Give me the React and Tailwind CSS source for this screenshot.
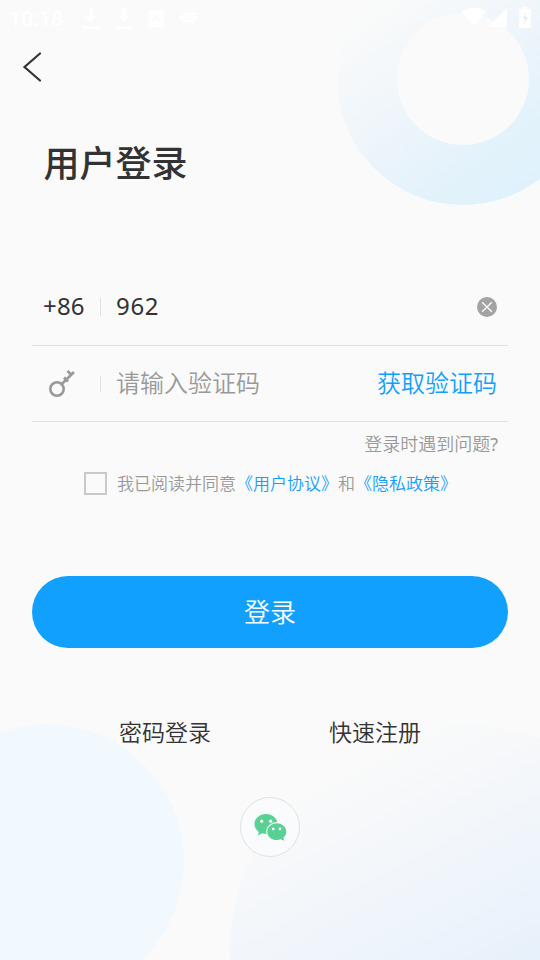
import { useState } from 'react';

const Backdrop = () => (
  <svg className="absolute inset-0" width="540" height="960" viewBox="0 0 540 960" aria-hidden="true">
    <defs>
      <linearGradient id="ring" gradientUnits="userSpaceOnUse" x1="375" y1="15" x2="510" y2="200">
        <stop offset="0" stopColor="#f9fafa" />
        <stop offset="0.5" stopColor="#ecf4fb" />
        <stop offset="0.8" stopColor="#e2f2fb" />
        <stop offset="1" stopColor="#dff2fb" />
      </linearGradient>
      <linearGradient id="bubble" gradientUnits="userSpaceOnUse" x1="345" y1="755" x2="475" y2="1010">
        <stop offset="0" stopColor="#fafafa" />
        <stop offset="0.35" stopColor="#f4f7fa" />
        <stop offset="0.65" stopColor="#eef4fc" />
        <stop offset="1" stopColor="#e5f0fa" />
      </linearGradient>
    </defs>
    <circle cx="463" cy="79" r="126" fill="url(#ring)" />
    <circle cx="463" cy="79" r="66" fill="#fafafa" />
    <circle cx="47" cy="861" r="137" fill="#f1f9ff" />
    <circle cx="459" cy="953" r="229" fill="url(#bubble)" />
  </svg>
);

const DownloadIcon = () => (
  <svg width="16" height="21" viewBox="0 0 16 21" fill="#fff">
    <path d="M6 0h4v8h4l-6 6-6-6h4zM0 18.500h16v2H0z" />
  </svg>
);

const StatusBar = () => (
  <div className="flex h-9 items-center pl-[9px] pr-[9px] text-white">
    <span className="w-[74px] pt-0.5 font-[Roboto] text-[21px] font-medium leading-none tracking-[0.2px]">10:18</span>
    <div className="flex w-[120px] items-center gap-[17px]">
      <DownloadIcon />
      <DownloadIcon />
      <svg width="15" height="17" viewBox="0 0 15 17">
        <rect width="15" height="17" rx="2" fill="#fff" />
        <path d="M4 12.500l3.500-7 3.500 7" fill="none" stroke="#fafafa" strokeWidth="1.800" />
      </svg>
      <svg width="20" height="14" viewBox="0 0 20 14" fill="none" stroke="#fff" strokeWidth="2.500" className="-ml-0.5">
        <path d="M3 3h15M0 6.500h19M3 10h13" />
      </svg>
    </div>
    <div className="-mt-0.5 ml-auto flex items-center">
      <svg width="24" height="20" viewBox="0 0 24 20" fill="#fff">
        <path d="M0 5Q12-4 24 5L12 19z" />
      </svg>
      <svg width="19" height="19" viewBox="0 0 19 19" fill="#fff" className="ml-0.5">
        <path d="M19 0v19H0z" />
      </svg>
      <svg width="12" height="21" viewBox="0 0 12 21" className="ml-3">
        <path d="M3.500 0h5v2H11q1 0 1 1v17q0 1-1 1H1q-1 0-1-1V3q0-1 1-1h2.500z" fill="#fff" />
        <path d="M7.500 5L3.500 12H6l-.5 5L9 10H6.500z" fill="#e3f0f9" />
      </svg>
    </div>
  </div>
);

const KeyIcon = () => (
  <svg width="26" height="28" viewBox="0 0 26 28" fill="none" stroke="#999" strokeWidth="2.600">
    <circle cx="8" cy="19" r="6.700" />
    <path d="M12.800 14L25 2M15 7.500l4 4M18.500 1l4 4" />
  </svg>
);

const ClearIcon = () => (
  <svg width="20" height="20" viewBox="0 0 20 20">
    <circle cx="10" cy="10" r="10" fill="#a3a3a3" />
    <path d="M5.200 5.200l9.600 9.600M14.800 5.200l-9.600 9.600" stroke="#fafafa" strokeWidth="1.400" />
  </svg>
);

const WechatIcon = () => (
  <svg width="34" height="28" viewBox="0 0 34 28" className="ml-px">
    <path d="M12 1C5.500 1 .5 5.500.5 11c0 3.200 1.700 6 4.300 7.900L3.800 22.500l4.400-2.300c1.300.4 2.600.5 3.800.5 6.500 0 11.500-4.400 11.500-9.700S18.500 1 12 1z" fill="#58d192" />
    <ellipse cx="22.800" cy="18.600" rx="10.700" ry="9.500" fill="#fafbfc" />
    <path d="M22.800 10.300c-5.300 0-9.500 3.700-9.500 8.400s4.200 8.400 9.500 8.400c1.400 0 2.700-.3 3.900-.8l3.500 1.500-.8-3.100c1.800-1.500 2.900-3.600 2.900-6 0-4.700-4.200-8.400-9.500-8.400z" fill="#58d192" />
    <g fill="#fff">
      <circle cx="7.700" cy="8.200" r="1.600" />
      <circle cx="16.600" cy="8.200" r="1.600" />
      <circle cx="19.200" cy="15.900" r="1.300" />
      <circle cx="26" cy="15.900" r="1.300" />
    </g>
  </svg>
);

const App = () => {
  const [phone, setPhone] = useState('962');
  const [agreed, setAgreed] = useState(false);

  return (
    <div className="relative h-[960px] w-[540px] overflow-hidden bg-[#fafafa] font-['Noto_Sans_CJK_SC',sans-serif] font-[350] text-[#333]">
      <Backdrop />
      <div className="relative flex h-full flex-col">
        <StatusBar />
        <button type="button" aria-label="返回" className="ml-[22px] mt-4 w-5">
          <svg width="20" height="30" viewBox="0 0 20 30" fill="none" stroke="#333" strokeWidth="2.200" strokeLinecap="round">
            <path d="M18 1.500L2.500 15 18 28.500" />
          </svg>
        </button>

        <h1 className="ml-[43.5px] mt-[52px] text-[36px] font-medium leading-[54px]">用户登录</h1>

        <form className="mx-8 mt-[81px]" onSubmit={(e) => e.preventDefault()}>
          <div className="flex h-[77px] items-center border-b border-[#dfe2e6] pl-[11px] pr-[11px]">
            <span className="w-[57px] pb-0.5 font-['Noto_Sans'] text-[24px] font-normal leading-9 tracking-[0.2px]">+86</span>
            <span className="h-[18px] w-px bg-[#dfe1e4]" />
            <input
              type="text"
              value={phone}
              onChange={(e) => setPhone(e.target.value)}
              className="ml-[15px] w-[300px] bg-transparent pb-0.5 font-['Noto_Sans'] text-[24px] font-normal tracking-[0.7px] outline-none"
            />
            <button type="button" aria-label="清除" className="ml-auto" onClick={() => setPhone('')}>
              <ClearIcon />
            </button>
          </div>

          <div className="flex h-[76px] items-center border-b border-[#dfe2e6] pl-[17px] pr-[11px]">
            <span className="w-[51px]">
              <KeyIcon />
            </span>
            <span className="h-4 w-px bg-[#dfe1e4]" />
            <span className="ml-[15px] pb-[3px] text-[24px] leading-9 text-[#999]">请输入验证码</span>
            <button type="button" className="ml-auto pb-[3px] text-[24px] leading-9 text-[#12a0ff]">获取验证码</button>
          </div>

          <p className="mt-[7px] pr-[10px] text-right text-[18px] leading-7 text-[#999]">
            登录时遇到问题<span className="font-['Noto_Sans'] font-normal">?</span>
          </p>

          <div className="ml-[52px] mt-[11px] flex items-center text-[17px] leading-7 text-[#999]">
            <button
              type="button"
              aria-label="同意协议"
              onClick={() => setAgreed(!agreed)}
              className={agreed ? 'mr-2.5 size-[23px] border-2 border-[#12a0ff] bg-[#12a0ff]' : 'mr-2.5 size-[23px] border-2 border-[#c9c9c9]'}
            />
            <span>我已阅读并同意</span>
            <a className="text-[#12a0ff]">《用户协议》</a>
            <span>和</span>
            <a className="text-[#12a0ff]">《隐私政策》</a>
          </div>

          <button type="submit" className="mt-[79px] h-[72px] w-full rounded-full bg-[#12a0ff] pb-1 text-[26px] text-white">
            登录
          </button>
        </form>

        <div className="mt-[65px] flex justify-center gap-[118px] text-[23px] leading-9">
          <a>密码登录</a>
          <a>快速注册</a>
        </div>

        <button type="button" aria-label="微信登录" className="mx-auto mt-[48px] flex size-[60px] items-center justify-center rounded-full border border-[#e0e1e3] bg-[#fafbfd]">
          <WechatIcon />
        </button>
      </div>
    </div>
  );
};

export default App;
